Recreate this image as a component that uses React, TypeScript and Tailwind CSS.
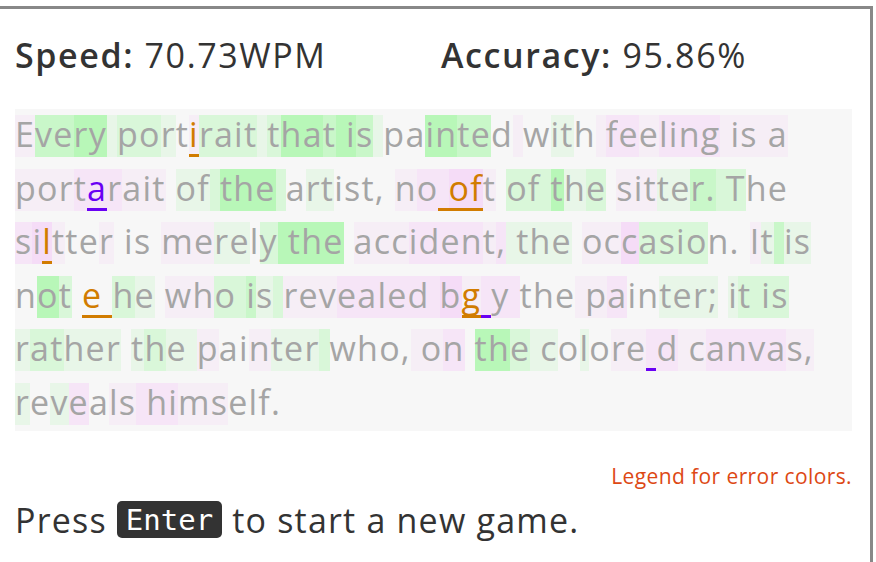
import React from "react";

const BG: Record<string, string> = {
  G: "bg-[#b8f7b8]",
  g: "bg-[#c9f7c9]",
  h: "bg-[#d9f7d9]",
  l: "bg-[#e8f6e8]",
  P: "bg-[#f5dcf7]",
  p: "bg-[#f6e5f7]",
  q: "bg-[#f6eef6]",
  ".": "",
};

type Line = { text: string; code: string; err: Record<number, "o" | "v"> };

const lines: Line[] = [
  {
    text: "Every portirait that is painted with feeling is a",
    code: "qggGGlhhl.qhhhhlhGGgGGgl..GGgg.q.ll.qppqppppqqqqq",
    err: { 10: "o" },
  },
  {
    text: "portarait of the artist, no oft of the sitter. The",
    code: "qqqpppqqq.llhGGGh.ll.....qppPPq.hhhGlh.qqqllgghh..",
    err: { 4: "v", 27: "o", 28: "o", 29: "o" },
  },
  {
    text: "siltter is merely the accident, the occasion. It is",
    code: "pPPq..q....qqll.hGGGG.qqqppppqpllll.qqPhhhh...qlgll",
    err: { 2: "o" },
  },
  {
    text: "not e he who is revealed bg y the painter; it is",
    code: ".Gh...hl.qqhhglhqqqppppppPqppp...qqp..llll.lhhhh",
    err: { 4: "o", 5: "o", 26: "o", 27: "v" },
  },
  {
    text: "rather the painter who, on the colore d canvas,",
    code: "lhhlll.lhllq..qlllh....qqp.GGhll.l.qqppqqppppqq",
    err: { 37: "v" },
  },
  {
    text: "reveals himself.",
    code: "l.lp.qqpppqq....",
    err: {},
  },
];

function TextLine({ line }: { line: Line }) {
  return (
    <div className="flex h-[42px] whitespace-pre">
      {line.text.split("").map((ch, i) => {
        const e = line.err[i];
        const bg = BG[line.code[i]] || "";
        let cls = "inline-block h-[42px] leading-[38px] tracking-[1.2px] " + bg;
        if (e === "o") cls += " text-[#d17c00] shadow-[inset_0_-3px_0_#d17c00]";
        else if (e === "v") cls += " text-[#6a00f4] shadow-[inset_0_-3px_0_#6a00f4]";
        return (
          <span key={i} className={cls}>
            {ch}
          </span>
        );
      })}
    </div>
  );
}

export default function App() {
  return (
    <div className="min-h-[562px] bg-white overflow-hidden" style={{ fontFamily: '"Open Sans", "Noto Sans", sans-serif' }}>
      <div className="mt-[6px] ml-[-7px] w-[880px] h-[600px] border-[3px] border-b-0 border-[#888888] pl-[19px] pr-[18px] pt-[28px]">
        <div className="grid grid-cols-[426px_1fr] h-[36px] items-center text-[34px] leading-[36px] tracking-[1.6px] text-[#333333]">
          <div>
            <span className="font-semibold">Speed:</span> 70.73WPM
          </div>
          <div>
            <span className="font-semibold">Accuracy:</span> 95.86%
          </div>
        </div>
        <div className="mt-[36px] bg-[#f7f7f7] pt-[6px] pb-[6px] flex flex-col gap-[11.6px] text-[34px] text-[#a5a5a5]">
          {lines.map((l, i) => (
            <TextLine key={i} line={l} />
          ))}
        </div>
        <div className="mt-[32px] flex justify-end text-[21px] leading-[26px] tracking-[0.4px] text-[#dd4814]">
          Legend for error colors.
        </div>
        <div className="mt-[11px] flex items-center h-[40px] text-[34px] leading-[40px] tracking-[1.2px] text-[#333333]">
          <span>Press</span>
          <span
            className="mx-[10px] h-[37px] px-[9px] flex items-center rounded-[5px] bg-[#333333] text-white text-[29px] tracking-normal"
            style={{ fontFamily: '"DejaVu Sans Mono", monospace' }}
          >
            Enter
          </span>
          <span>to start a new game.</span>
        </div>
      </div>
    </div>
  );
}
